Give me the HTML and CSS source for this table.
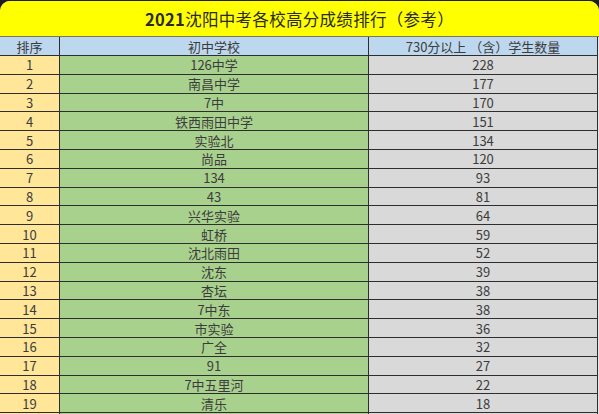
FILE: index.html
```html
<!DOCTYPE html>
<html lang="zh">
<head>
<meta charset="utf-8">
<title>2021沈阳中考各校高分成绩排行（参考）</title>
<link rel="stylesheet" href="styles.css">
</head>
<body>
<div class="sheet">
  <div class="title"><span class="year">2021</span>沈阳中考各校高分成绩排行（参考）</div>
  <div class="grid">
    <div class="hd">排序</div><div class="hd">初中学校</div><div class="hd">730分以上 （含）学生数量</div>
    <div class="rk">1</div><div class="sc">126中学</div><div class="nm">228</div>
    <div class="rk">2</div><div class="sc">南昌中学</div><div class="nm">177</div>
    <div class="rk">3</div><div class="sc">7中</div><div class="nm">170</div>
    <div class="rk">4</div><div class="sc">铁西雨田中学</div><div class="nm">151</div>
    <div class="rk">5</div><div class="sc">实验北</div><div class="nm">134</div>
    <div class="rk">6</div><div class="sc">尚品</div><div class="nm">120</div>
    <div class="rk">7</div><div class="sc">134</div><div class="nm">93</div>
    <div class="rk">8</div><div class="sc">43</div><div class="nm">81</div>
    <div class="rk">9</div><div class="sc">兴华实验</div><div class="nm">64</div>
    <div class="rk">10</div><div class="sc">虹桥</div><div class="nm">59</div>
    <div class="rk">11</div><div class="sc">沈北雨田</div><div class="nm">52</div>
    <div class="rk">12</div><div class="sc">沈东</div><div class="nm">39</div>
    <div class="rk">13</div><div class="sc">杏坛</div><div class="nm">38</div>
    <div class="rk">14</div><div class="sc">7中东</div><div class="nm">38</div>
    <div class="rk">15</div><div class="sc">市实验</div><div class="nm">36</div>
    <div class="rk">16</div><div class="sc">广全</div><div class="nm">32</div>
    <div class="rk">17</div><div class="sc">91</div><div class="nm">27</div>
    <div class="rk">18</div><div class="sc">7中五里河</div><div class="nm">22</div>
    <div class="rk">19</div><div class="sc">清乐</div><div class="nm">18</div>
    <div class="rk"></div><div class="sc"></div><div class="nm"></div>
  </div>
</div>
</body>
</html>
```
FILE: styles.css
```css
html, body {
  margin: 0;
  padding: 0;
  background: #1e1e1e;
  overflow: hidden;
}
body {
  padding-top: 1px;
  font-family: "Noto Sans CJK SC", "Noto Sans", sans-serif;
}
.sheet {
  width: 599px;
  height: 420px;
  border-radius: 10px 10px 0 0;
  overflow: hidden;
  background: #e6e6e6;
}
.title {
  height: 35px;
  background: #ffff00;
  border-bottom: 1px solid #7a7a50;
  display: flex;
  align-items: center;
  justify-content: center;
  font-size: 16.5px;
  font-weight: 400;
  color: #2a2a2a;
  letter-spacing: 0.3px;
}
.title .year {
  font-weight: 700;
}
.grid {
  display: grid;
  grid-template-columns: 59px 308px 228px;
  grid-template-rows: 18px;
  grid-auto-rows: 17.8px;
  gap: 1px;
  background: #2e2e2e;
  width: 597px;
  border-right: 1px solid #2e2e2e;
}
.grid > div {
  display: flex;
  align-items: center;
  justify-content: center;
  font-size: 13px;
  color: #3c3c3c;
  line-height: 1;
}
.hd {
  background: #bdd7ee;
}
.rk {
  background: #ffe699;
}
.sc {
  background: #a9d18e;
}
.nm {
  background: #d9d9d9;
}
```
